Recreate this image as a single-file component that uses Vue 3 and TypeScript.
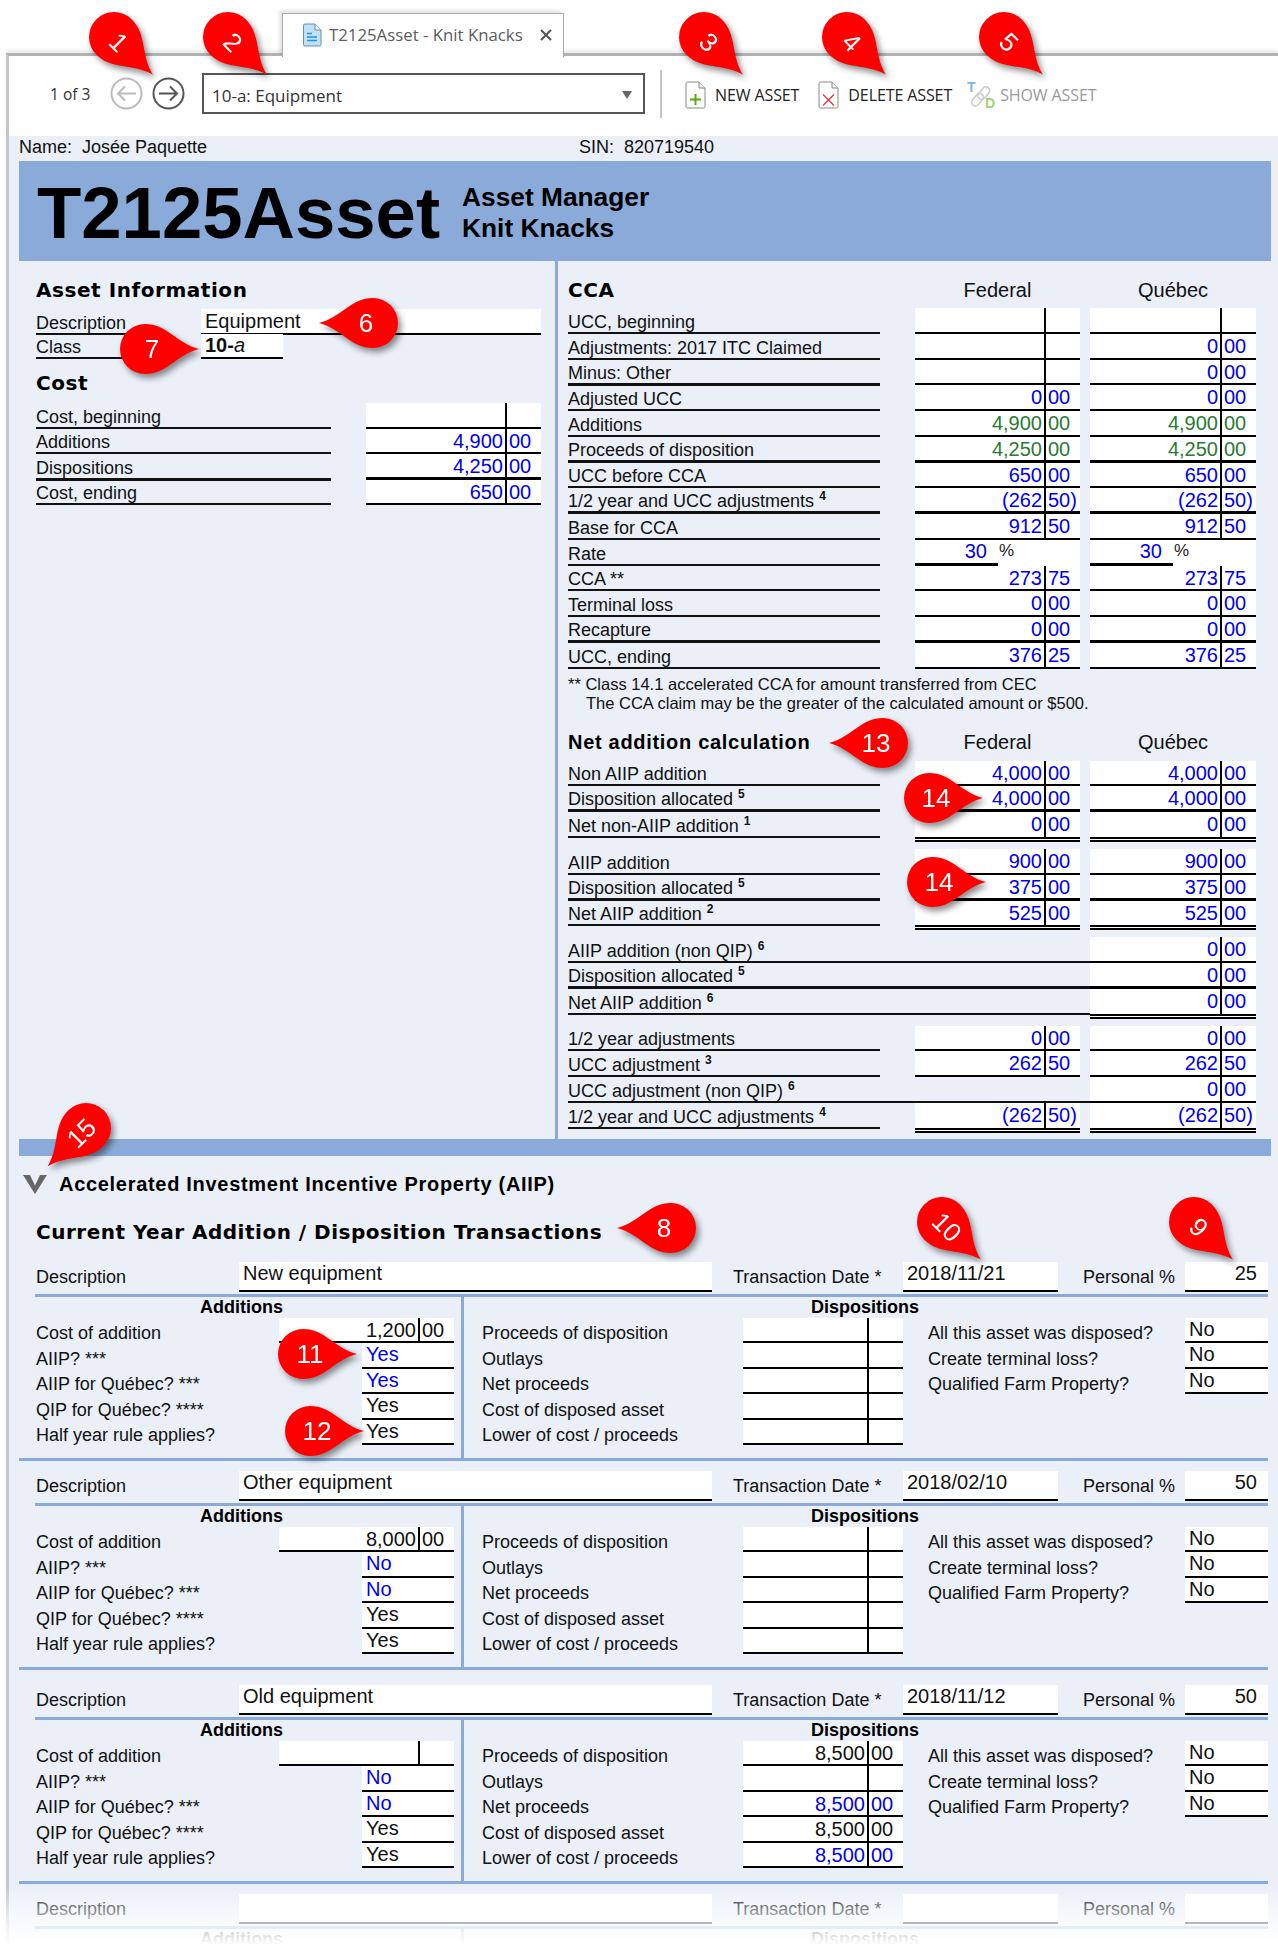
<script setup lang="ts">
type Tone = 'blue' | 'green' | 'black'

interface Money {
  d: string
  c: string
  tone?: Tone
}

interface CcaRow {
  label: string
  sup?: string
  fed?: Money | null
  que?: Money
  rate?: string
  line?: 'thick' | 'double'
}

interface Answer {
  text: string
  tone?: Tone
}

interface Transaction {
  desc: string
  date: string
  personal: string
  cost: Money
  answers: Answer[]
  disp: Money[]
  flags: string[]
}

interface Pin {
  n: string
  x: number
  y: number
  angle: number
  turn: number
}

const empty: Money = { d: '', c: '' }
const blue = (d: string, c = '00'): Money => ({ d, c, tone: 'blue' })
const green = (d: string, c = '00'): Money => ({ d, c, tone: 'green' })
const black = (d: string, c = '00'): Money => ({ d, c, tone: 'black' })

const costRows: { label: string; value: Money; line?: 'thick' }[] = [
  { label: 'Cost, beginning', value: empty },
  { label: 'Additions', value: blue('4,900') },
  { label: 'Dispositions', value: blue('4,250'), line: 'thick' },
  { label: 'Cost, ending', value: blue('650') },
]

const ccaRows: CcaRow[] = [
  { label: 'UCC, beginning', fed: empty, que: empty },
  { label: 'Adjustments: 2017 ITC Claimed', fed: empty, que: blue('0') },
  { label: 'Minus: Other', fed: empty, que: blue('0'), line: 'thick' },
  { label: 'Adjusted UCC', fed: blue('0'), que: blue('0') },
  { label: 'Additions', fed: green('4,900'), que: green('4,900') },
  { label: 'Proceeds of disposition', fed: green('4,250'), que: green('4,250'), line: 'thick' },
  { label: 'UCC before CCA', fed: blue('650'), que: blue('650') },
  { label: '1/2 year and UCC adjustments', sup: '4', fed: blue('(262', '50)'), que: blue('(262', '50)'), line: 'thick' },
  { label: 'Base for CCA', fed: blue('912', '50'), que: blue('912', '50') },
  { label: 'Rate', rate: '30' },
  { label: 'CCA **', fed: blue('273', '75'), que: blue('273', '75') },
  { label: 'Terminal loss', fed: blue('0'), que: blue('0') },
  { label: 'Recapture', fed: blue('0'), que: blue('0'), line: 'thick' },
  { label: 'UCC, ending', fed: blue('376', '25'), que: blue('376', '25') },
]

const netGroups: CcaRow[][] = [
  [
    { label: 'Non AIIP addition', fed: blue('4,000'), que: blue('4,000') },
    { label: 'Disposition allocated', sup: '5', fed: blue('4,000'), que: blue('4,000'), line: 'thick' },
    { label: 'Net non-AIIP addition', sup: '1', fed: blue('0'), que: blue('0'), line: 'double' },
  ],
  [
    { label: 'AIIP addition', fed: blue('900'), que: blue('900') },
    { label: 'Disposition allocated', sup: '5', fed: blue('375'), que: blue('375'), line: 'thick' },
    { label: 'Net AIIP addition', sup: '2', fed: blue('525'), que: blue('525'), line: 'double' },
  ],
  [
    { label: 'AIIP addition (non QIP)', sup: '6', fed: null, que: blue('0') },
    { label: 'Disposition allocated', sup: '5', fed: null, que: blue('0'), line: 'thick' },
    { label: 'Net AIIP addition', sup: '6', fed: null, que: blue('0'), line: 'double' },
  ],
  [
    { label: '1/2 year adjustments', fed: blue('0'), que: blue('0') },
    { label: 'UCC adjustment', sup: '3', fed: blue('262', '50'), que: blue('262', '50') },
    { label: 'UCC adjustment (non QIP)', sup: '6', fed: null, que: blue('0') },
    { label: '1/2 year and UCC adjustments', sup: '4', fed: blue('(262', '50)'), que: blue('(262', '50)'), line: 'double' },
  ],
]

const addLabels = ['AIIP? ***', 'AIIP for Québec? ***', 'QIP for Québec? ****', 'Half year rule applies?']
const dispLabels = ['Proceeds of disposition', 'Outlays', 'Net proceeds', 'Cost of disposed asset', 'Lower of cost / proceeds']
const flagLabels = ['All this asset was disposed?', 'Create terminal loss?', 'Qualified Farm Property?']

const noDisp = [empty, empty, empty, empty, empty]

const transactions: Transaction[] = [
  {
    desc: 'New equipment',
    date: '2018/11/21',
    personal: '25',
    cost: black('1,200'),
    answers: [{ text: 'Yes', tone: 'blue' }, { text: 'Yes', tone: 'blue' }, { text: 'Yes' }, { text: 'Yes' }],
    disp: noDisp,
    flags: ['No', 'No', 'No'],
  },
  {
    desc: 'Other equipment',
    date: '2018/02/10',
    personal: '50',
    cost: black('8,000'),
    answers: [{ text: 'No', tone: 'blue' }, { text: 'No', tone: 'blue' }, { text: 'Yes' }, { text: 'Yes' }],
    disp: noDisp,
    flags: ['No', 'No', 'No'],
  },
  {
    desc: 'Old equipment',
    date: '2018/11/12',
    personal: '50',
    cost: empty,
    answers: [{ text: 'No', tone: 'blue' }, { text: 'No', tone: 'blue' }, { text: 'Yes' }, { text: 'Yes' }],
    disp: [black('8,500'), empty, blue('8,500'), black('8,500'), blue('8,500')],
    flags: ['No', 'No', 'No'],
  },
]

// angle = where the tip points, turn = rotation of the number
const pins: Pin[] = [
  { n: '1', x: 114, y: 37, angle: 44, turn: 45 },
  { n: '2', x: 228, y: 37, angle: 44, turn: 45 },
  { n: '3', x: 704, y: 37, angle: 44, turn: 45 },
  { n: '4', x: 847, y: 37, angle: 44, turn: 45 },
  { n: '5', x: 1004, y: 37, angle: 44, turn: 45 },
  { n: '6', x: 373, y: 323, angle: 180, turn: 0 },
  { n: '7', x: 145, y: 349, angle: 0, turn: 0 },
  { n: '8', x: 671, y: 1228, angle: 180, turn: 0 },
  { n: '9', x: 1194, y: 1222, angle: 44, turn: 45 },
  { n: '10', x: 942, y: 1222, angle: 44, turn: 45 },
  { n: '11', x: 303, y: 1354, angle: 0, turn: 0 },
  { n: '12', x: 310, y: 1431, angle: 0, turn: 0 },
  { n: '13', x: 883, y: 743, angle: 180, turn: 0 },
  { n: '14', x: 929, y: 798, angle: 0, turn: 0 },
  { n: '14', x: 932, y: 882, angle: 0, turn: 0 },
  { n: '15', x: 86, y: 1128, angle: 135, turn: -45 },
]

const numberTransform = (pin: Pin) => {
  const rad = (pin.angle * Math.PI) / 180
  const x = pin.x + 7 * Math.cos(rad)
  const y = pin.y + 7 * Math.sin(rad)
  return `translate(${x} ${y}) rotate(${pin.turn})`
}
</script>

<template>
  <div class="page">
    <div class="tabbar">
      <div class="tab">
        <svg class="tab-icon" viewBox="0 0 20 24" width="20" height="24">
          <path d="M1.500 2.500a1.500 1.500 0 0 1 1.500-1.500H13l6 6v14.500a1.500 1.500 0 0 1-1.500 1.500H3a1.500 1.500 0 0 1-1.500-1.500z" fill="#bfe2f8" stroke="#6b8ea8" />
          <path d="M13 1v6h6" fill="#e8f4fc" stroke="#6b8ea8" />
          <path d="M5 10.500h5M5 14h10M5 17.500h10" stroke="#2a8fdc" stroke-width="1.500" />
        </svg>
        <span class="tab-title">T2125Asset - Knit Knacks</span>
        <svg class="tab-close" viewBox="0 0 12 12" width="12" height="12">
          <path d="M1 1l10 10M11 1L1 11" stroke="#555" stroke-width="2" />
        </svg>
      </div>
    </div>

    <div class="window">
      <div class="toolbar">
        <span class="pager">1 of 3</span>
        <svg class="nav prev" viewBox="0 0 33 33" width="33" height="33">
          <circle cx="16.500" cy="16.500" r="15" fill="none" stroke="#bbb" stroke-width="2" />
          <path d="M26 16.500H8M15 9.500l-7 7 7 7" fill="none" stroke="#bbb" stroke-width="2" />
        </svg>
        <svg class="nav next" viewBox="0 0 33 33" width="33" height="33">
          <circle cx="16.500" cy="16.500" r="15" fill="none" stroke="#555" stroke-width="2" />
          <path d="M7 16.500h18M18 9.500l7 7-7 7" fill="none" stroke="#555" stroke-width="2" />
        </svg>
        <div class="picker">
          <span>10-a: Equipment</span>
          <i class="caret"></i>
        </div>
        <div class="tool-sep"></div>
        <div class="tool new">
          <svg viewBox="0 0 21 28" width="21" height="28">
            <path d="M1 2.500A1.500 1.500 0 0 1 2.500 1H14l6 6v18.500a1.500 1.500 0 0 1-1.500 1.500h-16A1.500 1.500 0 0 1 1 25.500z" fill="#fff" stroke="#888" />
            <path d="M14 1v6h6" fill="#eee" stroke="#888" />
            <path d="M10.500 13v11M5 18.500h11" stroke="#5aa711" stroke-width="2" />
          </svg>
          <span>NEW ASSET</span>
        </div>
        <div class="tool del">
          <svg viewBox="0 0 21 28" width="21" height="28">
            <path d="M1 2.500A1.500 1.500 0 0 1 2.500 1H14l6 6v18.500a1.500 1.500 0 0 1-1.500 1.500h-16A1.500 1.500 0 0 1 1 25.500z" fill="#fff" stroke="#888" />
            <path d="M14 1v6h6" fill="#eee" stroke="#888" />
            <path d="M5 13.500l11 11M16 13.500l-11 11" stroke="#e8343c" stroke-width="1.300" />
          </svg>
          <span>DELETE ASSET</span>
        </div>
        <div class="tool show">
          <svg viewBox="0 0 29 28" width="29" height="28">
            <g fill="none" stroke="#c9c9c9" stroke-width="1.500" transform="rotate(-50 14 15)">
              <rect x="2" y="11" width="14" height="7.500" rx="3.700" />
              <rect x="11" y="11.500" width="14" height="7.500" rx="3.700" />
            </g>
            <text x="0" y="11" class="t-mark">T</text>
            <text x="18" y="27" class="d-mark">D</text>
          </svg>
          <span>SHOW ASSET</span>
        </div>
      </div>

      <div class="form">
        <div class="idline">
          <span class="who">Name:&nbsp; Josée Paquette</span>
          <span>SIN:&nbsp; 820719540</span>
        </div>

        <div class="banner">
          <div class="banner-title">T2125Asset</div>
          <div class="banner-sub">Asset Manager<br />Knit Knacks</div>
        </div>

        <div class="columns">
          <section class="left">
            <h2 class="heavy info-head">Asset Information</h2>
            <div class="info-row">
              <span class="under">Description</span>
              <span class="field wide-field">Equipment</span>
            </div>
            <div class="info-row">
              <span class="under">Class</span>
              <span class="field class-field"><b>10-</b><em>a</em></span>
            </div>
            <h2 class="heavy cost-head">Cost</h2>
            <div v-for="row in costRows" :key="row.label" class="cost-row" :class="row.line">
              <span class="under">{{ row.label }}</span>
              <div class="money" :class="row.value.tone">
                <span class="dollars">{{ row.value.d }}</span>
                <span class="cents">{{ row.value.c }}</span>
              </div>
            </div>
          </section>

          <section class="right">
            <div class="calc-head first">
              <h2 class="heavy">CCA</h2>
              <span class="fed">Federal</span>
              <span class="que">Québec</span>
            </div>
            <div v-for="row in ccaRows" :key="row.label" class="calc-row" :class="row.line">
              <span class="under">{{ row.label }}<sup v-if="row.sup">{{ row.sup }}</sup></span>
              <template v-if="row.rate">
                <div class="rate fed"><span class="rate-value">{{ row.rate }}</span><span class="pct">%</span></div>
                <div class="rate que"><span class="rate-value">{{ row.rate }}</span><span class="pct">%</span></div>
              </template>
              <template v-else>
                <div v-if="row.fed" class="money fed" :class="row.fed.tone">
                  <span class="dollars">{{ row.fed.d }}</span>
                  <span class="cents">{{ row.fed.c }}</span>
                </div>
                <div v-if="row.que" class="money que" :class="row.que.tone">
                  <span class="dollars">{{ row.que.d }}</span>
                  <span class="cents">{{ row.que.c }}</span>
                </div>
              </template>
            </div>

            <p class="note">** Class 14.1 accelerated CCA for amount transferred from CEC<br /><span class="note-indent">The CCA claim may be the greater of the calculated amount or $500.</span></p>

            <div class="calc-head">
              <h2 class="net-title">Net addition calculation</h2>
              <span class="fed">Federal</span>
              <span class="que">Québec</span>
            </div>
            <div v-for="(group, g) in netGroups" :key="g" class="calc-group">
              <div v-for="row in group" :key="row.label" class="calc-row" :class="[row.line, { full: row.fed === null }]">
                <span class="under">{{ row.label }}<sup v-if="row.sup">{{ row.sup }}</sup></span>
                <div v-if="row.fed" class="money fed" :class="row.fed.tone">
                  <span class="dollars">{{ row.fed.d }}</span>
                  <span class="cents">{{ row.fed.c }}</span>
                </div>
                <div v-if="row.que" class="money que" :class="row.que.tone">
                  <span class="dollars">{{ row.que.d }}</span>
                  <span class="cents">{{ row.que.c }}</span>
                </div>
              </div>
            </div>
          </section>
        </div>

        <div class="band"></div>

        <div class="aiip-head">
          <svg viewBox="0 0 24 19" width="24" height="19">
            <path d="M0 0h7l5 10.500L17 0h7L12 19z" fill="#666" />
          </svg>
          <h2>Accelerated Investment Incentive Property (AIIP)</h2>
        </div>
        <h2 class="tx-title">Current Year Addition / Disposition Transactions</h2>

        <div v-for="(tx, t) in transactions" :key="tx.desc" class="tx" :class="{ loose: t === 1 }">
          <div class="tx-top">
            <span class="tx-label">Description</span>
            <span class="field">{{ tx.desc }}</span>
            <span class="tx-label">Transaction Date *</span>
            <span class="field">{{ tx.date }}</span>
            <span class="tx-label">Personal %</span>
            <span class="field pct-field">{{ tx.personal }}</span>
          </div>
          <div class="tx-body">
            <div class="tx-add">
              <div class="tx-sub">Additions</div>
              <div class="add-row">
                <span class="tx-label">Cost of addition</span>
                <div class="money cost-cell" :class="tx.cost.tone">
                  <span class="dollars">{{ tx.cost.d }}</span>
                  <span class="cents">{{ tx.cost.c }}</span>
                </div>
              </div>
              <div v-for="(a, i) in tx.answers" :key="i" class="add-row">
                <span class="tx-label">{{ addLabels[i] }}</span>
                <span class="answer" :class="a.tone">{{ a.text }}</span>
              </div>
            </div>
            <div class="tx-disp">
              <div class="tx-sub">Dispositions</div>
              <div class="disp-grid">
                <template v-for="(m, i) in tx.disp" :key="i">
                  <span class="tx-label disp-label">{{ dispLabels[i] }}</span>
                  <div class="money" :class="m.tone">
                    <span class="dollars">{{ m.d }}</span>
                    <span class="cents">{{ m.c }}</span>
                  </div>
                  <template v-if="tx.flags[i]">
                    <span class="tx-label flag-label">{{ flagLabels[i] }}</span>
                    <span class="answer">{{ tx.flags[i] }}</span>
                  </template>
                </template>
              </div>
            </div>
          </div>
        </div>

        <div class="tx ghost">
          <div class="tx-top">
            <span class="tx-label">Description</span>
            <span class="field"></span>
            <span class="tx-label">Transaction Date *</span>
            <span class="field"></span>
            <span class="tx-label">Personal %</span>
            <span class="field pct-field"></span>
          </div>
          <div class="tx-body">
            <div class="tx-add"><div class="tx-sub">Additions</div></div>
            <div class="tx-disp"><div class="tx-sub">Dispositions</div></div>
          </div>
        </div>
      </div>
    </div>

    <div class="fade"></div>

    <svg class="pins" viewBox="0 0 1278 1947" width="1278" height="1947">
      <g v-for="(pin, i) in pins" :key="i">
        <path
          :transform="`translate(${pin.x} ${pin.y}) rotate(${pin.angle})`"
          d="M54 0C31-6 22-25 0-25A25 25 0 1 0 0 25C22 25 31 6 54 0Z"
          fill="#f00"
        />
        <text :transform="numberTransform(pin)" class="pin-num" dy=".36em">{{ pin.n }}</text>
      </g>
    </svg>
  </div>
</template>

<style scoped>
.page {
  position: relative;
  width: 1278px;
  height: 1947px;
  overflow: hidden;
  background: #fff;
  font-family: "Liberation Sans", Arial, sans-serif;
  font-size: 18px;
  color: #111;
}

h2 {
  margin: 0;
  font-size: 20px;
}

/* tab strip */
.tabbar {
  height: 53px;
  padding: 13px 0 0 282px;
  box-sizing: border-box;
}

.tab {
  position: relative;
  z-index: 1;
  display: flex;
  align-items: center;
  width: 282px;
  height: 44px;
  box-sizing: border-box;
  padding: 0 0 2px 19px;
  background: #fff;
  border: 1px solid #aaa;
  border-bottom: none;
  box-shadow: -3px -3px 3px rgba(0, 0, 0, 0.1);
  font-family: "Open Sans", sans-serif;
}

.tab-title {
  margin-left: 7px;
  font-size: 16.800px;
  white-space: nowrap;
  color: #5c5c5c;
}

.tab-close {
  flex-shrink: 0;
  margin-left: 17px;
}

/* window */
.window {
  margin-left: 6px;
  border-left: 3px solid #c6c6c6;
  border-top: 3px solid #b2b2b2;
  box-shadow: 0 -3px 3px rgba(0, 0, 0, 0.08);
}

.toolbar {
  display: flex;
  align-items: center;
  height: 80px;
  box-sizing: border-box;
  padding-bottom: 5px;
  font-family: "Open Sans", sans-serif;
  font-size: 16px;
}

.pager {
  width: 40px;
  margin-left: 41px;
  font-size: 15.500px;
  color: #333;
  white-space: nowrap;
}

.nav {
  flex-shrink: 0;
}

.prev {
  margin-left: 20px;
}

.next {
  margin-left: 9px;
}

.picker {
  display: flex;
  align-items: center;
  justify-content: space-between;
  width: 443px;
  height: 41px;
  box-sizing: border-box;
  margin-left: 17px;
  padding: 3px 11px 0 8px;
  border: 2px solid #555;
  font-size: 17px;
  color: #333;
}

.caret {
  border-left: 5px solid transparent;
  border-right: 5px solid transparent;
  border-top: 8px solid #666;
}

.tool-sep {
  width: 2px;
  height: 48px;
  margin-left: 15px;
  background: #c4c4c4;
}

.tool {
  display: flex;
  align-items: center;
  margin-top: 3px;
  white-space: nowrap;
  letter-spacing: -0.1px;
}

.tool span {
  margin-left: 9px;
}

.new {
  margin-left: 23px;
  color: #222;
}

.del {
  margin-left: 19px;
  color: #222;
}

.show {
  margin-left: 15px;
  color: #9a9a9a;
}

.show span {
  margin-left: 4px;
}

.t-mark,
.d-mark {
  font-family: "Liberation Sans", sans-serif;
  font-weight: 700;
  font-size: 14px;
}

.t-mark {
  fill: #7cb9ea;
}

.d-mark {
  fill: #a6d07e;
}

/* form */
.form {
  background: #eaeff8;
  padding-bottom: 40px;
}

.idline {
  display: flex;
  height: 25px;
  padding-left: 10px;
  line-height: 23px;
}

.who {
  width: 560px;
}

.banner {
  display: flex;
  align-items: center;
  height: 100px;
  box-sizing: border-box;
  margin: 0 7px 0 10px;
  padding-top: 4px;
  background: #8aabd9;
  color: #000;
  font-weight: 700;
}

.banner-title {
  margin-left: 18px;
  font-size: 72.500px;
  line-height: 1;
}

.banner-sub {
  margin: 0 0 0 22px;
  font-size: 26.300px;
  line-height: 31px;
}

.columns {
  display: flex;
  margin-left: 10px;
}

.left {
  flex: none;
  width: 536px;
  box-sizing: border-box;
  padding-left: 17px;
}

.right {
  flex: none;
  padding-left: 10px;
  border-left: 3px solid #8aabd9;
}

.heavy {
  font-family: "DejaVu Sans", sans-serif;
  font-weight: 700;
  font-size: 20px;
  letter-spacing: 0.55px;
  color: #000;
}

.info-head {
  height: 48px;
  box-sizing: border-box;
  padding-top: 17px;
  line-height: 24px;
}

.under {
  display: block;
  align-self: end;
  border-bottom: 2px solid #111;
  line-height: 19px;
  white-space: nowrap;
}

.info-row {
  display: grid;
  grid-template-columns: 94px 1fr;
  column-gap: 71px;
  height: 25px;
}

.field {
  display: block;
  height: 100%;
  box-sizing: border-box;
  padding: 0 0 0 4px;
  background: #fff;
  border-bottom: 2px solid #000;
  font-size: 20px;
  line-height: 23px;
  white-space: nowrap;
  color: #111;
}

.wide-field {
  width: 340px;
  line-height: 24px;
}

.class-field {
  width: 82px;
}

.class-field em {
  font-weight: 400;
}

.cost-head {
  height: 44px;
  box-sizing: border-box;
  padding-top: 12px;
  line-height: 24px;
}

.cost-row {
  display: grid;
  grid-template-columns: 295px 175px;
  column-gap: 35px;
  height: 25.600px;
}

.money {
  display: grid;
  grid-template-columns: 1fr 34px;
  align-items: end;
  height: 100%;
  box-sizing: border-box;
  background: #fff;
  border-bottom: 2px solid #000;
  font-size: 20px;
  line-height: 22px;
  color: #0000ee;
}

.money.green {
  color: #2a7a34;
}

.money.black {
  color: #111;
}

.dollars {
  height: 100%;
  box-sizing: border-box;
  padding: 1px 2px 0 0;
  text-align: right;
  border-right: 2px solid #000;
  white-space: nowrap;
}

.cents {
  height: 100%;
  box-sizing: border-box;
  padding: 1px 0 0 2px;
  white-space: nowrap;
}

.thick .under,
.thick .money {
  border-bottom-width: 3px;
}

.cost-row.thick .money {
  border-bottom-width: 4px;
}

.calc-row.double {
  height: 29.800px;
}

.double .money {
  border-bottom: 5px double #000;
}

.double .under {
  margin-bottom: 4px;
}

.calc-head {
  display: grid;
  grid-template-columns: 312px 35px 165px 10px 166px;
  height: 48px;
  box-sizing: border-box;
  padding-top: 11px;
  align-items: center;
  font-size: 20px;
  line-height: 24px;
}

.calc-head.first {
  height: 47px;
}

.calc-head .fed,
.calc-head .que {
  text-align: center;
}

.net-title {
  font-size: 20px;
  letter-spacing: 0.7px;
  white-space: nowrap;
  color: #000;
}

.calc-row {
  display: grid;
  grid-template-columns: 312px 35px 165px 10px 166px;
  height: 25.770px;
}

.calc-row .under {
  grid-column: 1;
}

.calc-row.full .under {
  grid-column: 1 / 5;
}

.fed {
  grid-column: 3;
}

.que {
  grid-column: 5;
}

sup {
  margin-left: 5px;
  font-size: 12px;
  font-weight: 700;
  line-height: 0;
}

.rate {
  display: flex;
  background: #fff;
  font-size: 20px;
  line-height: 22px;
  height: 100%;
  align-items: flex-start;
}

.rate-value {
  width: 83px;
  height: 100%;
  box-sizing: border-box;
  padding-right: 11px;
  text-align: right;
  color: #0000ee;
  border-bottom: 3px solid #000;
}

.pct {
  margin-left: 1px;
  font-size: 17px;
  color: #222;
}

.note {
  margin: 0;
  padding-top: 6px;
  font-size: 16.500px;
  line-height: 19px;
  white-space: nowrap;
}

.note-indent {
  padding-left: 18px;
}

.calc-group {
  margin-bottom: 7px;
}

.calc-group:last-child {
  margin-bottom: 6px;
}

.band {
  height: 17px;
  margin: 0 7px 0 10px;
  background: #8aabd9;
}

.aiip-head {
  display: flex;
  align-items: center;
  height: 58px;
  padding-left: 14px;
}

.aiip-head h2 {
  margin-left: 12px;
  font-size: 20px;
  letter-spacing: 0.7px;
  color: #000;
}

.tx-title {
  height: 48px;
  padding-left: 27px;
  box-sizing: border-box;
  font-family: "DejaVu Sans", sans-serif;
  font-size: 20px;
  line-height: 36px;
  letter-spacing: 0.5px;
  color: #000;
}

/* transactions */
.tx {
  margin: 0 10px 10px 10px;
}

.tx.loose {
  margin-bottom: 15px;
}

.tx-top {
  display: grid;
  grid-template-columns: 203px 473px 21px 170px 155px 25px 102px 83px;
  height: 24px;
  padding-left: 17px;
}

.tx-top > :nth-child(3) {
  grid-column: 4;
}

.tx-top > :nth-child(5) {
  grid-column: 7;
}

.pct-field {
  padding: 0 11px 0 0;
  text-align: right;
}

.tx-label {
  line-height: 30px;
  white-space: nowrap;
}

.tx-body {
  position: relative;
  display: grid;
  grid-template-columns: 445px 804px;
  margin-top: 8px;
  border-bottom: 3px solid #8aabd9;
}

.tx-body::before {
  content: "";
  position: absolute;
  top: 0;
  left: 16px;
  right: 0;
  height: 3px;
  background: #8aabd9;
}

.tx-add {
  height: 164px;
  box-sizing: border-box;
  padding: 3px 0 0 17px;
  border-right: 3px solid #8aabd9;
}

.tx-sub {
  height: 21px;
  padding-right: 14px;
  font-weight: 700;
  line-height: 21px;
  text-align: center;
  color: #000;
}

.add-row {
  display: grid;
  grid-template-columns: 326px 92px;
  height: 25.500px;
}

.add-row .tx-label,
.disp-grid .tx-label {
  align-self: end;
  line-height: 20px;
}

.cost-cell {
  grid-column: 1 / 3;
  grid-row: 1;
  width: 175px;
  margin-left: 243px;
}

.add-row > .tx-label {
  grid-column: 1;
  grid-row: 1;
  z-index: 1;
}

.answer {
  display: block;
  height: 100%;
  box-sizing: border-box;
  padding-left: 4px;
  background: #fff;
  border-bottom: 2px solid #000;
  font-size: 20px;
  line-height: 22px;
  color: #111;
}

.answer.blue {
  color: #0000ee;
}

.tx-disp {
  height: 164px;
  box-sizing: border-box;
  padding-top: 3px;
}

.tx-disp .tx-sub {
  width: 410px;
  margin-left: 196px;
  padding-right: 0;
}

.disp-grid {
  display: grid;
  grid-template-columns: 261px 160px 282px 83px;
  grid-auto-rows: 25.500px;
  padding-left: 18px;
}

.disp-label {
  grid-column: 1;
}

.flag-label {
  padding-left: 25px;
}

.fade {
  position: absolute;
  left: 0;
  right: 0;
  bottom: 0;
  height: 62px;
  background: linear-gradient(to bottom, rgba(255, 255, 255, 0), rgba(255, 255, 255, 0.67) 55%, #fff 97%);
}

.pins {
  position: absolute;
  top: 0;
  left: 0;
  pointer-events: none;
  filter: drop-shadow(3px 4px 3px rgba(0, 0, 0, 0.45));
}

.pin-num {
  fill: #fff;
  font-size: 26px;
  text-anchor: middle;
}
</style>
